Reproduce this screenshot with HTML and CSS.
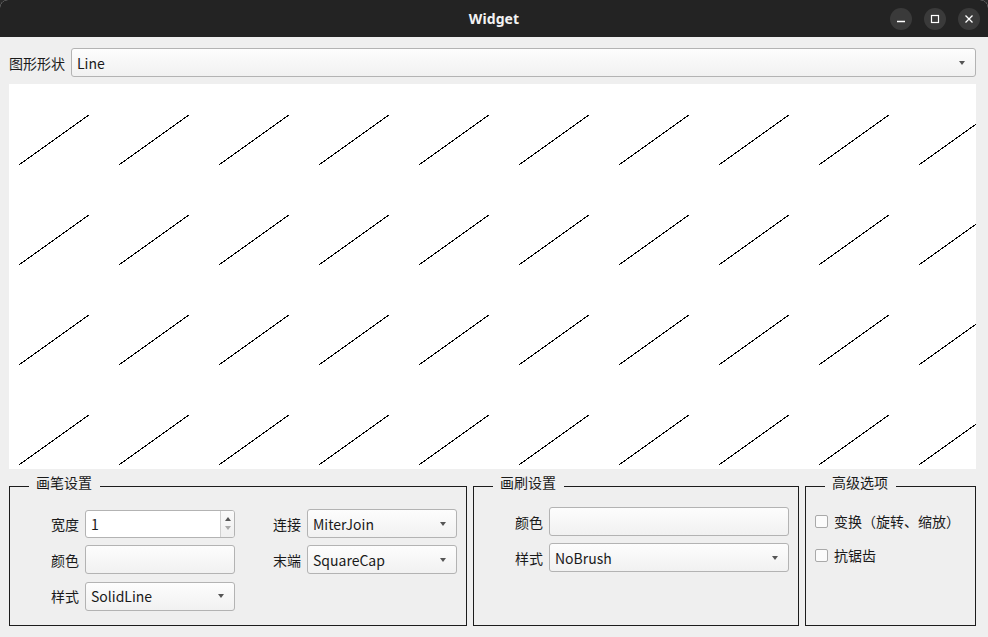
FILE: index.html
```html
<!DOCTYPE html>
<html lang="zh-CN">
<head>
<meta charset="utf-8">
<title>Widget</title>
<link rel="stylesheet" href="styles.css">
</head>
<body>
<div class="window">
  <header class="titlebar">
    <div class="tb-spacer"></div>
    <span class="title">Widget</span>
    <div class="wm-buttons">
      <span class="wm-btn"><svg width="10" height="10" viewBox="0 0 10 10"><path d="M1 7.5h8" stroke="#fff" stroke-width="1.3"/></svg></span>
      <span class="wm-btn"><svg width="10" height="10" viewBox="0 0 10 10"><rect x="1.5" y="1.5" width="7" height="7" fill="none" stroke="#fff" stroke-width="1.2"/></svg></span>
      <span class="wm-btn"><svg width="10" height="10" viewBox="0 0 10 10"><path d="M1.5 1.5l7 7M8.5 1.5l-7 7" stroke="#fff" stroke-width="1.3"/></svg></span>
    </div>
  </header>

  <main class="content">
    <div class="shape-row">
      <span class="label">图形形状</span>
      <div class="combo combo-wide"><span class="combo-text">Line</span><i class="arrow"></i></div>
    </div>

    <div class="canvas">
      <svg width="967" height="385" viewBox="0 0 967 385" shape-rendering="crispEdges">
        <defs>
          <pattern id="lines" x="0" y="0" width="100" height="100" patternUnits="userSpaceOnUse">
            <line x1="10.5" y1="80.5" x2="80.5" y2="30.5" stroke="#000" stroke-width="1"/>
          </pattern>
        </defs>
        <rect x="0" y="0" width="967" height="385" fill="url(#lines)"/>
      </svg>
    </div>

    <div class="groups">
      <fieldset class="group group-pen">
        <legend>画笔设置</legend>
        <div class="pen-grid">
          <span class="flabel">宽度</span>
          <div class="spinbox"><span class="spin-text">1</span><span class="spin-btns"><i class="up"></i><i class="down"></i></span></div>
          <span class="flabel">连接</span>
          <div class="combo"><span class="combo-text">MiterJoin</span><i class="arrow"></i></div>

          <span class="flabel">颜色</span>
          <div class="colorbtn"></div>
          <span class="flabel">末端</span>
          <div class="combo"><span class="combo-text">SquareCap</span><i class="arrow"></i></div>

          <span class="flabel">样式</span>
          <div class="combo"><span class="combo-text">SolidLine</span><i class="arrow"></i></div>
        </div>
      </fieldset>

      <fieldset class="group group-brush">
        <legend>画刷设置</legend>
        <div class="brush-grid">
          <span class="flabel">颜色</span>
          <div class="colorbtn"></div>
          <span class="flabel">样式</span>
          <div class="combo"><span class="combo-text">NoBrush</span><i class="arrow"></i></div>
        </div>
      </fieldset>

      <fieldset class="group group-adv">
        <legend>高级选项</legend>
        <div class="adv-list">
          <label class="check"><span class="box"></span><span>变换（旋转、缩放）</span></label>
          <label class="check"><span class="box"></span><span>抗锯齿</span></label>
        </div>
      </fieldset>
    </div>
  </main>
</div>
</body>
</html>
```

FILE: styles.css
```css
* { box-sizing: border-box; }

html, body {
  margin: 0;
  padding: 0;
  background: #2a2a2a;
}

body {
  width: 988px;
  height: 637px;
  overflow: hidden;
  font-family: "Noto Sans CJK SC", "Noto Sans", sans-serif;
  font-size: 14px;
  color: #1a1a1a;
}

.window {
  width: 988px;
  height: 637px;
  background: #efefef;
  border-radius: 8px 8px 0 0;
  overflow: hidden;
}

/* title bar */
.titlebar {
  height: 37px;
  background: #232323;
  display: grid;
  grid-template-columns: 1fr auto 1fr;
  align-items: center;
}

.title {
  font-family: "Noto Sans", "Open Sans", sans-serif;
  font-weight: 700;
  font-size: 14px;
  color: #f2f2f2;
  letter-spacing: 0.1px;
}

.wm-buttons {
  justify-self: end;
  display: flex;
  gap: 12px;
  padding-right: 8px;
}

.wm-btn {
  width: 22px;
  height: 22px;
  border-radius: 50%;
  background: #3a3a3a;
  display: flex;
  align-items: center;
  justify-content: center;
}

.wm-btn svg { display: block; }

/* content */
.content {
  padding: 11px 12px 0 9px;
}

.shape-row {
  display: flex;
  align-items: center;
  gap: 6px;
  height: 29px;
}

.label {
  white-space: nowrap;
}

.combo {
  position: relative;
  height: 29px;
  border: 1px solid #b3b3b3;
  border-radius: 3px;
  background: linear-gradient(to bottom, #fdfdfd, #f1f1f1);
  display: flex;
  align-items: center;
  padding-left: 5px;
}

.combo-wide { flex: 1; }

.combo-text {
  line-height: 20px;
}

.arrow {
  position: absolute;
  right: 10px;
  top: 50%;
  margin-top: -2px;
  width: 0;
  height: 0;
  border-left: 3.5px solid transparent;
  border-right: 3.5px solid transparent;
  border-top: 4px solid #555;
}

.canvas {
  margin-top: 7px;
  width: 967px;
  height: 385px;
  background: #fff;
}

.canvas svg { display: block; }

/* group boxes */
.groups {
  margin-top: 5px;
  display: flex;
  gap: 6px;
}

.group {
  margin: 0;
  padding: 0;
  min-width: 0;
  height: 152px;
  border: 1px solid #1c1c1c;
}

.group legend {
  margin-left: 19px;
  padding: 0 8px 8px 7px;
  line-height: 16px;
  height: 24px;
}

.group-pen { width: 458px; }
.group-brush { width: 326px; }
.group-adv { width: 171px; }

.flabel {
  justify-self: end;
  white-space: nowrap;
}

.pen-grid {
  display: grid;
  grid-template-columns: 28px 150px 60px 150px;
  grid-auto-rows: 29px;
  column-gap: 6px;
  row-gap: 7px;
  align-items: center;
  padding: 11px 0 0 41px;
}

.pen-grid > :nth-child(n+9) { margin-top: 1px; }

.brush-grid {
  display: grid;
  grid-template-columns: 28px 240px;
  grid-auto-rows: 29px;
  column-gap: 6px;
  row-gap: 7px;
  align-items: center;
  padding: 9px 0 0 41px;
}

.colorbtn {
  height: 29px;
  border: 1px solid #b3b3b3;
  border-radius: 3px;
  background: linear-gradient(to bottom, #fdfdfd, #f1f1f1);
}

.spinbox {
  height: 28px;
  border: 1px solid #b3b3b3;
  border-radius: 3px;
  background: #fff;
  display: flex;
  align-items: center;
  padding-left: 5px;
}

.spin-text {
  flex: 1;
  line-height: 20px;
}

.spin-btns {
  align-self: stretch;
  width: 14px;
  border-left: 1px solid #d0d0d0;
  background: linear-gradient(to bottom, #fafafa, #efefef);
  border-radius: 0 2px 2px 0;
  display: flex;
  flex-direction: column;
  align-items: center;
  justify-content: center;
  gap: 5px;
}

.spin-btns .up {
  width: 0;
  height: 0;
  border-left: 3.5px solid transparent;
  border-right: 3.5px solid transparent;
  border-bottom: 4px solid #555;
}

.spin-btns .down {
  width: 0;
  height: 0;
  border-left: 3.5px solid transparent;
  border-right: 3.5px solid transparent;
  border-top: 4px solid #a8a8a8;
}

.adv-list {
  display: flex;
  flex-direction: column;
  gap: 14px;
  padding: 13px 0 0 9px;
}

.check {
  display: flex;
  align-items: center;
  gap: 6px;
  line-height: 20px;
  white-space: nowrap;
}

.check .box {
  width: 13px;
  height: 13px;
  border: 1px solid #a9a9a9;
  border-radius: 2px;
  background: #fbfbfb;
}
```
